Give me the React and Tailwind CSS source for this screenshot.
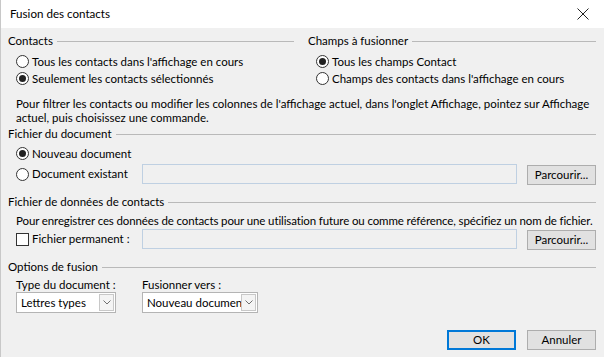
import React from 'react';

const font = { fontFamily: 'Lato, "Noto Sans", sans-serif' };

function SectionHeader({ children }) {
  return (
    <div className="flex items-center h-[16px] gap-[4px]">
      <span className="whitespace-nowrap">{children}</span>
      <div className="flex-1 h-px bg-[#b9b9b9]" />
    </div>
  );
}

function Radio({ checked, label }) {
  return (
    <div className="flex items-center h-[17px]">
      <span className="shrink-0 w-[13px] h-[13px] rounded-full border border-[#333333] bg-white flex items-center justify-center">
        {checked && <span className="w-[7px] h-[7px] rounded-full bg-[#222222]" />}
      </span>
      <span className="ml-[3px] whitespace-nowrap">{label}</span>
    </div>
  );
}

function Button({ children, primary }) {
  return (
    <button
      className={`h-[20px] w-[69px] bg-[#e1e1e1] text-[11.5px] flex items-center justify-center ${
        primary ? 'border-2 border-[#0078d7]' : 'border border-[#adadad]'
      }`}
    >
      {children}
    </button>
  );
}

function Select({ value, width }) {
  return (
    <div className={`h-[21px] ${width} bg-white border border-[#b4b4b4] flex items-center pl-[4px] pr-[1px]`}>
      <span className="flex-1 overflow-hidden whitespace-nowrap">{value}</span>
      <span className="w-[15px] h-[17px] border border-[#c8c8c8] bg-[#f4f4f4] flex items-center justify-center shrink-0">
        <svg width="8" height="5" viewBox="0 0 8 5">
          <path d="M0.5 0.5 L4 4 L7.5 0.5" fill="none" stroke="#707070" strokeWidth="1" />
        </svg>
      </span>
    </div>
  );
}

export default function App() {
  return (
    <div
      className="w-[604px] h-[357px] bg-[#f0f0f0] border-l border-[#c8c8c8] text-[11.5px] leading-[14px] text-[#000000] overflow-hidden"
      style={font}
    >
      {/* Title bar */}
      <div className="h-[28px] bg-white flex items-center justify-between pl-[9px] pr-[15px]">
        <span className="text-[11.6px]">Fusion des contacts</span>
        <svg width="12" height="12" viewBox="0 0 12 12">
          <path d="M0.5 0.5 L11.5 11.5 M11.5 0.5 L0.5 11.5" stroke="#222222" strokeWidth="1" />
        </svg>
      </div>

      <div className="pl-[7px] pr-[8px]">
        {/* Contacts / Champs */}
        <div className="grid grid-cols-[286px_1fr] gap-[14px] mt-[5px]">
          <div>
            <SectionHeader>Contacts</SectionHeader>
            <div className="pl-[8px] mt-[4px]">
              <Radio label="Tous les contacts dans l'affichage en cours" />
              <Radio checked label="Seulement les contacts sélectionnés" />
            </div>
          </div>
          <div>
            <SectionHeader>Champs à fusionner</SectionHeader>
            <div className="pl-[8px] mt-[4px]">
              <Radio checked label="Tous les champs Contact" />
              <Radio label="Champs des contacts dans l'affichage en cours" />
            </div>
          </div>
        </div>

        <p className="pl-[8px] mt-[10px] pr-[2px]">
          Pour filtrer les contacts ou modifier les colonnes de l'affichage actuel, dans l'onglet Affichage, pointez sur Affichage actuel, puis choisissez une commande.
        </p>

        {/* Fichier du document */}
        <div className="mt-[1px]">
          <SectionHeader>Fichier du document</SectionHeader>
        </div>
        <div className="pl-[8px] mt-[3px]">
          <Radio checked label="Nouveau document" />
          <div className="flex items-start mt-[2px]">
            <div className="w-[126px] h-[20px] flex items-center">
              <Radio label="Document existant" />
            </div>
            <div className="w-[376px] h-[20px] border border-[#bfd0e2] bg-[#f0f0f0]" />
            <div className="ml-[10px] mt-[1px]">
              <Button>Parcourir...</Button>
            </div>
          </div>
        </div>

        {/* Fichier de données */}
        <div className="mt-[9px]">
          <SectionHeader>Fichier de données de contacts</SectionHeader>
        </div>
        <p className="pl-[8px] mt-[4px] whitespace-nowrap tracking-[-0.12px]">
          Pour enregistrer ces données de contacts pour une utilisation future ou comme référence, spécifiez un nom de fichier.
        </p>
        <div className="pl-[8px] mt-[1px] flex items-start">
          <div className="w-[126px] h-[20px] flex items-center">
            <span className="shrink-0 w-[13px] h-[13px] border border-[#333333] bg-white" />
            <span className="ml-[3px] whitespace-nowrap">Fichier permanent :</span>
          </div>
          <div className="w-[376px] h-[20px] border border-[#bfd0e2] bg-[#f0f0f0]" />
          <div className="ml-[10px] mt-[1px]">
            <Button>Parcourir...</Button>
          </div>
        </div>

        {/* Options de fusion */}
        <div className="mt-[9px]">
          <SectionHeader>Options de fusion</SectionHeader>
        </div>
        <div className="pl-[8px] mt-[3px] flex">
          <div className="w-[126px]">
            <div className="h-[14px] whitespace-nowrap">Type du document :</div>
            <Select value="Lettres types" width="w-[100px]" />
          </div>
          <div>
            <div className="h-[14px] whitespace-nowrap">Fusionner vers :</div>
            <Select value="Nouveau document" width="w-[116px]" />
          </div>
        </div>

        <div className="flex justify-end gap-[11px] mt-[17px]">
          <Button primary>OK</Button>
          <Button>Annuler</Button>
        </div>
      </div>
    </div>
  );
}
